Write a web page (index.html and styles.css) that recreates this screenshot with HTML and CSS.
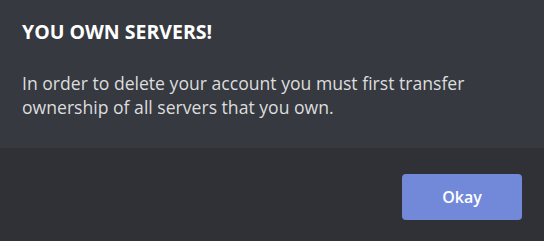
FILE: index.html
```html
<!DOCTYPE html>
<html>
<head>
<meta charset="utf-8">
<link rel="stylesheet" href="styles.css">
</head>
<body>
<div class="modal">
  <div class="content">
    <h2 class="title">YOU OWN SERVERS!</h2>
    <p class="body">In order to delete your account you must first transfer ownership of all servers that you own.</p>
  </div>
  <div class="footer">
    <button class="btn">Okay</button>
  </div>
</div>
</body>
</html>
```
FILE: styles.css
```css
html, body {
  margin: 0;
  padding: 0;
  background: #2f3136;
}
.modal {
  width: 544px;
  height: 241px;
  display: flex;
  flex-direction: column;
  font-family: "Open Sans", "Noto Sans", sans-serif;
}
.content {
  background: #36393f;
  height: 148px;
  box-sizing: border-box;
  padding: 19px 22px 0 22px;
}
.title {
  margin: 0;
  color: #ffffff;
  font-size: 19.5px;
  font-weight: 700;
  line-height: 26px;
}
.body {
  margin: 26px 0 0 0;
  color: #dcddde;
  font-size: 17.6px;
  line-height: 24px;
}
.footer {
  flex: 1;
  background: #2f3136;
  display: flex;
  justify-content: flex-end;
  align-items: flex-start;
  padding: 26px 22px 0 0;
}
.btn {
  width: 120px;
  height: 46px;
  border: none;
  border-radius: 4px;
  background: #7289da;
  color: #ffffff;
  font-family: inherit;
  font-size: 16px;
  font-weight: 600;
}
```
